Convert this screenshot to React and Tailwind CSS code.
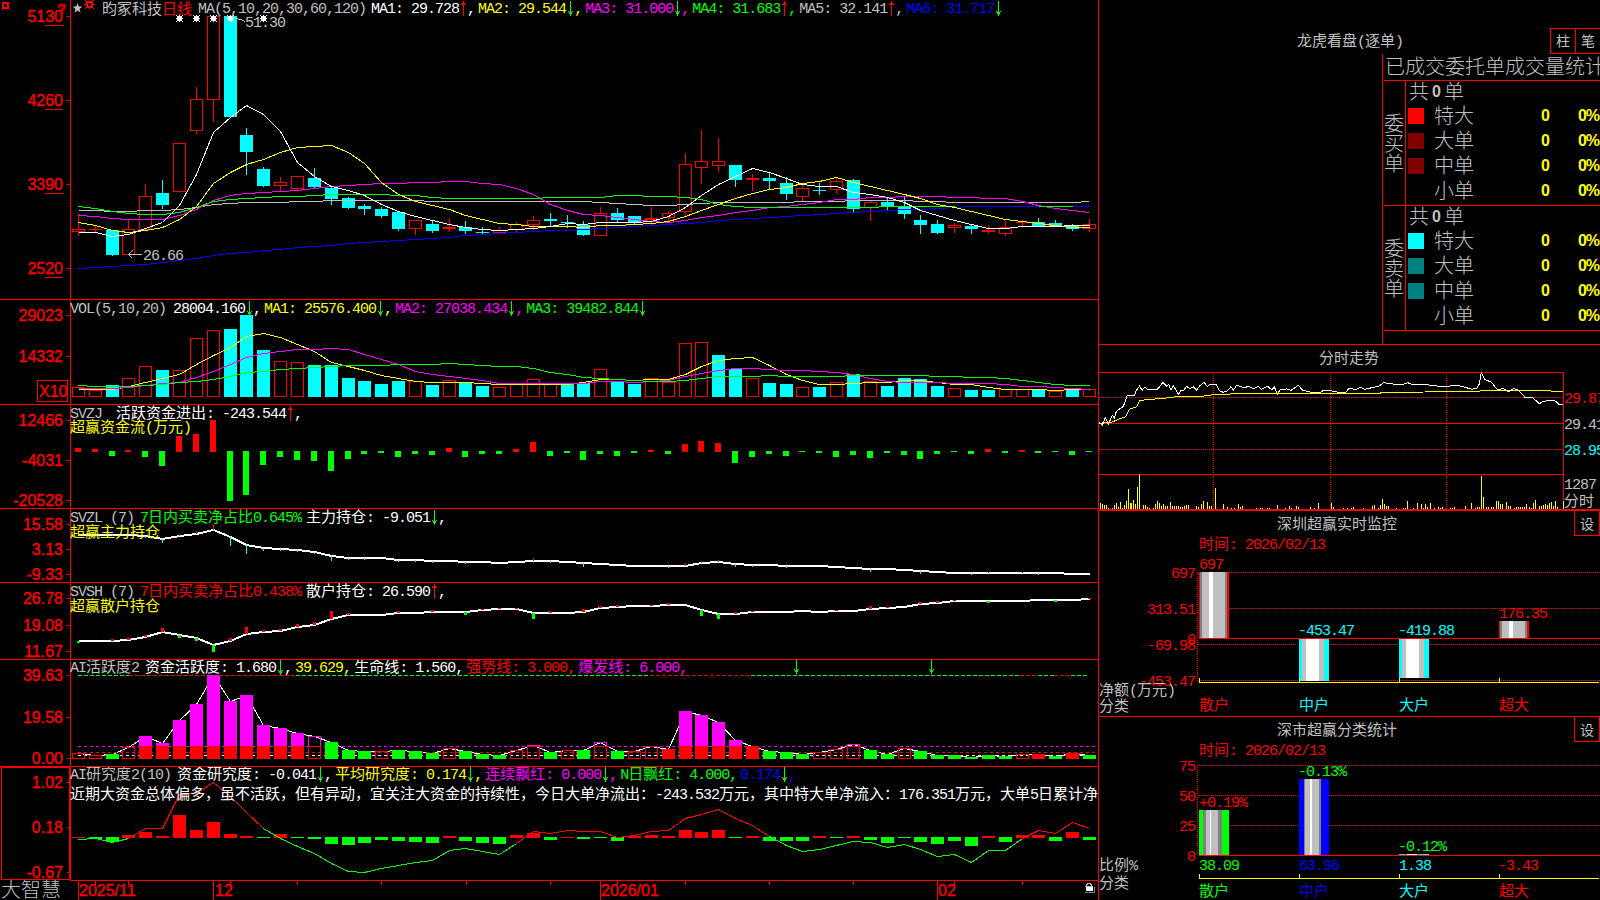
import { Fragment } from "react"

const RED = "#ff0000"
const GREEN = "#00ff00"
const CYAN = "#00ffff"
const MAGENTA = "#ff00ff"
const YELLOW = "#ffff00"
const BLUE = "#0000ff"
const SILVER = "#c0c0c0"

const cx = (i) => Math.floor(78.4 + 16.85 * i)

// [color, high, top, bottom, low]
const candles = [
  ["r", 214, 229, 231, 235], ["r", 225, 229, 229, 232], ["c", 230, 230, 255, 255], ["r", 219, 229, 254, 254],
  ["r", 184, 196, 229, 229], ["c", 180, 193, 205, 208], ["r", 143, 143, 191, 191], ["r", 87, 99, 130, 133],
  ["r", 16, 16, 99, 121], ["c", 16, 16, 117, 117], ["c", 128, 135, 152, 174], ["c", 167, 169, 186, 186],
  ["r", 177, 182, 185, 191], ["r", 176, 176, 188, 190], ["c", 168, 178, 187, 188], ["c", 186, 188, 199, 204],
  ["c", 197, 198, 208, 208], ["c", 204, 206, 209, 214], ["c", 207, 209, 216, 217], ["c", 212, 212, 229, 230],
  ["r", 220, 220, 228, 234], ["c", 220, 224, 231, 232], ["r", 218, 227, 228, 231], ["c", 221, 227, 231, 233],
  ["c", 227, 232, 233, 234], ["r", 227, 230, 232, 232], ["r", 222, 224, 229, 232], ["r", 216, 220, 224, 229],
  ["c", 213, 219, 221, 226], ["c", 215, 222, 223, 227], ["c", 221, 225, 235, 235], ["r", 207, 213, 235, 235],
  ["c", 208, 213, 220, 222], ["c", 216, 216, 222, 224], ["r", 207, 218, 219, 224], ["r", 211, 213, 217, 221],
  ["r", 153, 164, 211, 215], ["r", 130, 161, 167, 183], ["r", 138, 161, 165, 171], ["c", 165, 165, 180, 186],
  ["r", 174, 178, 179, 190], ["c", 172, 178, 181, 189], ["c", 177, 183, 194, 199], ["r", 184, 188, 196, 200],
  ["c", 183, 190, 191, 194], ["r", 178, 181, 189, 193], ["c", 179, 180, 209, 212], ["r", 200, 202, 207, 220],
  ["c", 198, 202, 206, 210], ["c", 196, 207, 214, 218], ["c", 215, 220, 225, 233], ["c", 220, 224, 233, 233],
  ["r", 223, 225, 227, 232], ["c", 224, 226, 229, 233], ["r", 225, 230, 231, 233], ["r", 221, 227, 233, 235],
  ["r", 220, 222, 222, 225], ["c", 218, 222, 226, 226], ["c", 220, 223, 226, 226], ["c", 224, 225, 229, 230],
  ["r", 219, 224, 228, 231],
]

const priceLines = [
  [BLUE, [268, 267, 266, 265, 264, 262, 260, 258, 255, 253, 252, 250, 249, 247, 246, 245, 243, 242, 241, 240, 239, 238, 237, 235, 234, 233, 232, 231, 230, 230, 229, 228, 227, 226, 225, 224, 223, 222, 220, 219, 218, 217, 216, 215, 214, 213, 212, 211, 210, 209, 209, 208, 207, 206, 206, 206, 206, 206, 206, 206, 206]],
  [SILVER, [210, 210, 211, 211, 210, 210, 209, 207, 204, 203, 202, 202, 202, 201, 201, 200, 200, 200, 200, 200, 200, 201, 201, 201, 201, 201, 201, 201, 201, 201, 201, 202, 203, 204, 205, 205, 204, 203, 202, 202, 202, 202, 202, 201, 201, 201, 200, 200, 200, 200, 201, 201, 202, 202, 202, 202, 202, 202, 202, 202, 201]],
  [MAGENTA, [215, 216, 218, 219, 219, 219, 215, 209, 200, 195, 193, 192, 191, 190, 188, 186, 185, 184, 183, 183, 182, 182, 181, 181, 183, 184, 188, 194, 204, 210, 214, 215, 217, 219, 221, 222, 220, 217, 215, 212, 210, 207, 206, 204, 202, 199, 199, 197, 197, 196, 196, 196, 197, 197, 198, 198, 201, 205, 208, 210, 212]],
  [GREEN, [206, 208, 211, 213, 214, 214, 212, 207, 201, 199, 198, 197, 196, 196, 195, 194, 194, 194, 194, 195, 195, 197, 198, 198, 198, 198, 198, 198, 197, 197, 197, 197, 195, 195, 196, 196, 197, 199, 204, 206, 207, 207, 207, 207, 207, 207, 207, 207, 206, 206, 206, 206, 206]],
  [YELLOW, [222, 225, 230, 232, 230, 227, 219, 206, 183, 172, 164, 159, 152, 147, 146, 145, 152, 163, 182, 194, 201, 205, 209, 215, 219, 223, 224, 226, 226, 226, 227, 225, 225, 224, 223, 221, 216, 210, 204, 198, 193, 189, 187, 183, 181, 177, 182, 186, 190, 194, 198, 204, 207, 211, 215, 219, 221, 223, 225, 227, 227]],
  ["#ffffff", [232, 232, 236, 234, 228, 222, 205, 174, 132, 117, 105, 114, 131, 162, 176, 186, 190, 195, 204, 211, 216, 220, 224, 227, 229, 230, 229, 228, 226, 223, 224, 222, 222, 222, 221, 216, 207, 195, 184, 176, 168, 172, 178, 184, 186, 186, 192, 194, 197, 202, 210, 215, 220, 224, 228, 228, 226, 226, 226, 225, 225]],
]

const volumeTops = [387, 390, 385, 378, 366, 370, 370, 338, 330, 329, 315, 350, 361, 362, 365, 365, 378, 381, 384, 381, 381, 385, 380, 382, 386, 387, 384, 379, 384, 383, 383, 369, 382, 384, 378, 382, 343, 342, 355, 369, 378, 383, 384, 387, 387, 382, 374, 381, 386, 378, 379, 386, 388, 390, 390, 389, 389, 390, 391, 390, 389]
const volumeRed = [0, 1, 3, 4, 6, 7, 8, 12, 13, 20, 22, 25, 26, 27, 28, 31, 34, 35, 36, 37, 40, 43, 45, 47, 52, 55, 56, 58, 60]

const volumeLines = [
  [YELLOW, [389, 389, 389, 386, 382, 378, 374, 364, 355, 347, 336, 333, 337, 344, 351, 362, 366, 370, 375, 378, 381, 382, 382, 382, 383, 384, 384, 384, 384, 384, 382, 379, 379, 380, 379, 379, 374, 366, 360, 358, 357, 365, 374, 380, 384, 384, 383, 382, 382, 380, 380, 382, 384, 384, 387, 389, 389, 389, 390, 389, 389]],
  [MAGENTA, [388, 388, 388, 387, 385, 383, 382, 377, 371, 364, 357, 353, 351, 349, 349, 348, 349, 354, 359, 364, 371, 374, 376, 378, 380, 383, 383, 383, 383, 383, 383, 381, 381, 382, 381, 380, 376, 373, 370, 368, 368, 369, 370, 370, 371, 372, 374, 378, 381, 382, 382, 382, 383, 383, 383, 384, 386, 386, 387, 388, 389]],
  [GREEN, [385, 386, 386, 386, 385, 384, 382, 381, 379, 376, 372, 371, 369, 368, 367, 366, 365, 365, 365, 364, 364, 364, 363, 364, 365, 366, 366, 368, 372, 374, 377, 378, 379, 380, 381, 381, 380, 378, 376, 376, 376, 375, 376, 376, 376, 376, 375, 375, 375, 375, 375, 376, 376, 377, 377, 378, 380, 382, 384, 385, 385]],
]

// end of every bar, measured from the zero line at 451
const flow = [448, 449, 456, 450, 457, 466, 436, 434, 420, 501, 495, 465, 457, 460, 461, 471, 459, 454, 453, 457, 454, 455, 448, 457, 454, 454, 449, 442, 456, 453, 460, 454, 456, 453, 450, 454, 444, 441, 443, 463, 457, 454, 456, 452, 453, 457, 455, 458, 453, 455, 459, 454, 452, 454, 449, 453, 450, 453, 452, 455, 452]

const mainHold = [535, 535, 535, 535, 536, 539, 536, 534, 530, 537, 545, 548, 549, 550, 552, 556, 558, 558, 558, 560, 560, 561, 561, 562, 562, 563, 562, 561, 561, 562, 563, 564, 565, 566, 566, 566, 566, 563, 562, 564, 565, 565, 566, 566, 566, 567, 568, 569, 569, 570, 571, 572, 573, 573, 573, 573, 573, 573, 573, 574, 574]
const mainTicks = [
  [5, 543], [6, 534], [7, 531], [8, 524], [9, 546], [10, 554], [11, 551], [14, 554], [15, 561], [19, 562], [23, 564], [27, 558],
  [30, 567], [35, 568], [36, 563], [37, 561], [38, 560], [39, 567], [40, 567], [42, 568], [47, 572], [50, 574], [53, 575],
  [54, 572], [56, 572], [57, 575], [2, 536], [4, 538], [12, 551], [13, 552], [16, 560], [17, 560], [20, 562], [21, 563], [28, 563],
]

const retailHold = [641, 641, 641, 640, 637, 632, 635, 638, 645, 641, 634, 632, 631, 627, 625, 619, 615, 615, 615, 613, 613, 612, 612, 612, 610, 609, 609, 613, 613, 613, 612, 608, 607, 606, 606, 605, 605, 610, 614, 614, 612, 612, 612, 611, 612, 611, 611, 609, 608, 607, 604, 603, 601, 601, 601, 601, 601, 600, 600, 600, 599]
const retailTicks = [
  [0, 643], [2, 639], [3, 638], [4, 635], [5, 628], [6, 638], [7, 641], [8, 652], [9, 638], [10, 627], [11, 630], [12, 629],
  [13, 624], [14, 622], [15, 611], [16, 613], [19, 611], [21, 610], [23, 615], [24, 609], [25, 608], [26, 608], [27, 619],
  [28, 611], [30, 609], [31, 606], [32, 605], [34, 605], [35, 603], [37, 616], [38, 619], [39, 612], [40, 611], [45, 610],
  [47, 606], [48, 607], [50, 602], [51, 601], [52, 600], [54, 603], [58, 602], [60, 598],
]

// o: hollow red, g: green, m: magenta over red, h: hollow magenta over red, f: solid red
const activity = [
  ["o", 753], ["o", 755], ["g", 754], ["o", 747], ["m", 736], ["m", 743], ["m", 720], ["m", 704], ["m", 675], ["m", 701],
  ["m", 695], ["m", 725], ["m", 728], ["m", 733], ["h", 736], ["g", 742], ["g", 750], ["g", 751], ["o", 751], ["g", 750],
  ["g", 751], ["g", 753], ["o", 748], ["g", 751], ["g", 754], ["g", 755], ["o", 750], ["h", 745], ["g", 752], ["o", 750],
  ["g", 750], ["h", 742], ["g", 751], ["o", 751], ["o", 746], ["f", 749], ["m", 711], ["m", 715], ["m", 722], ["m", 740],
  ["f", 746], ["g", 751], ["g", 752], ["g", 754], ["o", 752], ["o", 749], ["h", 744], ["g", 750], ["g", 754], ["o", 748],
  ["g", 751], ["g", 755], ["g", 755], ["g", 757], ["g", 755], ["g", 756], ["o", 754], ["f", 754], ["g", 756], ["f", 753],
  ["g", 755],
]
const ceiling = [
  [78, 129, GREEN], [129, 296, RED], [296, 650, GREEN], [650, 751, RED], [751, 1020, GREEN],
  [1020, 1038, RED], [1038, 1054, GREEN], [1054, 1071, RED], [1071, 1089, GREEN],
]

const research = [837, 839, 842, 835, 832, 836, 815, 830, 822, 834, 836, 838, 834, 838, 839, 844, 845, 843, 840, 841, 842, 843, 836, 841, 843, 844, 835, 833, 840, 837, 839, 838, 841, 836, 835, 836, 830, 832, 830, 838, 836, 841, 841, 841, 836, 838, 836, 840, 843, 838, 842, 844, 841, 846, 836, 842, 835, 835, 841, 832, 840]
const researchLine = [839, 838, 842, 838, 828, 828, 794, 793, 782, 796, 812, 828, 838, 846, 853, 863, 871, 872, 868, 865, 862, 860, 850, 848, 851, 854, 843, 831, 833, 830, 831, 831, 837, 835, 831, 830, 818, 814, 809, 818, 825, 836, 845, 851, 849, 845, 841, 842, 847, 844, 849, 856, 854, 862, 850, 850, 838, 830, 833, 822, 828]
const researchRuns = [[0, 3, GREEN], [3, 11, RED], [11, 26, GREEN], [26, 41, RED], [41, 56, GREEN], [56, 60, RED]]

// intraday curves, in thirds of a pixel
const intraday = [28,247,37,256,46,233,55,253,67,226,73,235,79,214,100,199,112,166,133,166,139,151,149,138,156,151,165,141,172,149,190,148,200,150,210,139,219,127,230,139,236,133,243,150,250,137,265,163,273,152,282,150,290,139,300,146,310,141,320,150,330,137,342,127,352,140,360,133,378,133,388,152,400,157,412,153,423,140,430,151,440,136,452,139,462,144,475,139,490,146,505,139,515,148,533,139,545,149,553,141,562,162,572,148,590,147,603,151,625,136,638,151,660,156,690,159,700,151,720,152,740,156,768,157,776,146,800,148,810,142,825,148,850,142,868,138,880,128,900,131,925,134,940,133,953,128,965,133,1000,132,1030,137,1060,140,1100,136,1120,140,1145,148,1160,145,1168,132,1174,98,1184,118,1205,127,1222,149,1240,146,1255,155,1272,146,1285,150,1305,172,1328,173,1348,191,1360,184,1385,181,1398,184,1405,192,1420,193]
const average = [28,250,45,248,67,246,90,236,106,231,118,208,139,201,149,182,170,179,220,175,260,170,335,169,370,164,445,161,870,160,875,157,1005,156,1010,154,1168,154,1172,151,1380,152,1385,154,1420,154]
const trades = [31,489,37,492,43,495,49,495,55,504,67,504,73,495,79,489,85,500,91,486,97,504,103,495,109,483,115,447,121,489,124,489,130,480,136,492,142,441,148,403,160,495,166,495,172,501,178,504,190,504,196,492,202,483,208,489,214,498,220,492,226,498,232,498,241,486,247,498,253,498,259,498,265,498,271,501,277,501,283,498,289,495,295,495,319,498,325,501,334,492,340,483,352,486,358,498,364,498,376,444,400,492,412,501,424,504,433,504,445,492,451,501,457,498,499,504,511,504,517,504,532,504,538,504,562,495,586,504,598,498,604,504,619,498,625,501,661,501,673,504,685,489,724,489,730,501,760,504,772,504,784,504,790,501,820,504,847,498,853,495,865,504,871,495,877,477,883,492,889,498,895,498,919,504,940,504,946,504,952,483,970,504,982,489,994,492,1000,504,1006,492,1012,501,1021,489,1033,504,1045,501,1051,504,1057,501,1081,504,1087,504,1093,501,1126,498,1144,489,1156,504,1162,501,1168,501,1174,408,1180,471,1189,501,1195,501,1204,501,1210,501,1219,483,1225,483,1231,492,1237,492,1249,486,1255,498,1261,498,1273,504,1279,501,1285,501,1291,501,1297,501,1303,501,1309,492,1318,501,1324,504,1330,489,1336,480,1348,498,1354,498,1360,495,1366,492,1372,495,1378,489,1384,486,1390,498,1396,483,1402,501,1420,483]

const pairs = (flat) => Array.from({ length: flat.length / 2 }, (_, i) => [1090 + flat[2 * i] / 3, 340 + flat[2 * i + 1] / 3])
const series = (ys, from = 0) => ys.map((y, i) => `${cx(i + from) + 0.5},${y + 0.5}`).join(" ")

const CJK = "font-['Noto_Sans_CJK_SC',sans-serif] font-normal text-[15px] tracking-normal"
const LATIN = "font-['Liberation_Mono',monospace] font-normal text-[15px] tracking-[-1px]"
const AXIS = "font-['Liberation_Sans',sans-serif] text-[16px]"
const chunks = (text) => text.split(/([\u3000-\u9fff\uff00-\uffef]+)/).filter(Boolean)
const isCjk = (text) => /[\u3000-\u9fff\uff00-\uffef]/.test(text)

function Words({ children, className = "" }) {
  return (
    <span className={`whitespace-pre ${className}`}>
      {chunks(children).map((part, i) => (
        <span key={i} className={isCjk(part) ? CJK : LATIN}>{part}</span>
      ))}
    </span>
  )
}

function Arrow({ up }) {
  return (
    <svg className="h-[15px] w-2 shrink-0" viewBox="0 0 8 15" shapeRendering="crispEdges">
      {up ? (
        <path d="M4 0h1v15h-1zM3 2h3v1h-3zM2 3h5v1h-5z" fill={RED} />
      ) : (
        <path d="M4 0h1v15h-1zM2 10h1v1h3v-1h1v1h-1v2h-3v-2h-1z" fill={GREEN} />
      )}
    </svg>
  )
}

// one "name: value↑," item of an indicator header
function Item({ text, dir, color, last }) {
  return (
    <span className={`mr-[3px] flex shrink-0 items-center ${color}`}>
      <Words>{text}</Words>
      {dir && <Arrow up={dir === "up"} />}
      {!last && <Words>,</Words>}
    </span>
  )
}

function Header({ className, children }) {
  return <div className={`absolute left-[70px] flex h-4 items-center leading-4 ${className}`}>{children}</div>
}

function Scale({ ticks, bottom, top }) {
  return (
    <>
      <rect x={70} y={top} width={1} height={bottom - top} fill={RED} />
      {ticks.map(([label, y]) => (
        <Fragment key={label}>
          <rect x={67} y={y} width={3} height={1} fill={RED} />
          <text x={63} y={y + 6} textAnchor="end" fill={RED} stroke={RED} strokeWidth={0.35} className={AXIS}>
            {label}
          </text>
        </Fragment>
      ))}
    </>
  )
}

function Panel({ top, height, ticks, className, children, header }) {
  return (
    <section className={`relative w-[1098px] shrink-0 overflow-hidden border-[#ff0000] ${className}`}>
      <svg className="block" width={1098} height={height} viewBox={`0 ${top} 1098 ${height}`} shapeRendering="crispEdges">
        <Scale ticks={ticks} top={top} bottom={top + height} />
        {children}
      </svg>
      {header}
    </section>
  )
}

function Box({ x, top, bottom, color }) {
  return <rect x={x - 5.5} y={top + 0.5} width={12} height={bottom - top} fill="none" stroke={color} />
}

function Spark({ x, y }) {
  return (
    <g fill="#ffffff">
      <rect x={x - 2} y={y - 2} width={5} height={5} />
      <path d={`M${x} ${y - 3}h1v7h-1zM${x - 3} ${y}h7v1h-7zM${x - 3} ${y - 3}h1v1h-1zM${x + 3} ${y - 3}h1v1h-1zM${x - 3} ${y + 3}h1v1h-1zM${x + 3} ${y + 3}h1v1h-1z`} />
    </g>
  )
}

function Candle({ x, kind, high, top, bottom, low }) {
  const color = kind === "r" ? RED : CYAN
  const thin = bottom - top < 2
  return (
    <g>
      <rect x={x} y={high} width={1} height={top - high} fill={color} />
      <rect x={x} y={bottom} width={1} height={low - bottom + 1} fill={color} />
      {kind === "c" && <rect x={x - 6} y={top} width={13} height={bottom - top} fill={color} />}
      {kind === "r" && thin && <rect x={x - 6} y={top} width={13} height={bottom - top + 1} fill={color} />}
      {kind === "r" && !thin && <Box x={x} top={top} bottom={bottom} color={color} />}
    </g>
  )
}

function PricePanel() {
  return (
    <Panel
      top={0}
      height={299}
      className="h-[300px] border-b"
      ticks={[["5130", 16], ["4260", 100], ["3390", 184], ["2520", 268]]}
      header={
        <div className="absolute left-[102px] top-0 flex h-4 items-center leading-4">
          <Words className="text-[#c0c0c0]">昀冢科技</Words>
          <Words className="mr-1.5 text-[#ff0000]">日线</Words>
          <Words className="mr-[5px] text-[#c0c0c0]">MA(5,10,20,30,60,120)</Words>
          <Item text="MA1: 29.728" dir="up" color="text-white" />
          <Item text="MA2: 29.544" dir="down" color="text-[#ffff00]" />
          <Item text="MA3: 31.000" dir="down" color="text-[#ff00ff]" />
          <Item text="MA4: 31.683" dir="up" color="text-[#00ff00]" />
          <Item text="MA5: 32.141" dir="up" color="text-[#c0c0c0]" />
          <Item text="MA6: 31.717" dir="down" color="text-[#0000ff]" last />
        </div>
      }
    >
      {[25, 109, 193, 277].map((y) => <rect key={y} x={45} y={y} width={18} height={1} fill={RED} />)}
      <path d="M3 3h5v5h-5z" fill="none" stroke={RED} strokeWidth={2} />
      <path d="M9 9h1v1h-1zM2 9h1v1h-1z" fill={RED} />
      <text x={57} y={14} fill="#d00000" stroke="#d00000" className="font-['Liberation_Sans',sans-serif] text-[15px] font-bold">?</text>
      <path d="M77.500 3l1.300 3.600h3.600l-2.900 2.300 1.100 3.800-3.100-2.300-3.100 2.300 1.100-3.800-2.900-2.300h3.600z" fill={SILVER} shapeRendering="auto" />
      <path d="M87 2h5v5h-5z" fill="none" stroke={RED} strokeWidth={2} />
      <path d="M85 0h1v1h-1zM93 0h1v1h-1zM85 8h1v1h-1zM93 8h1v1h-1zM89 8h1v1h-1zM84 4h2v1h-2zM93 4h2v1h-2z" fill={RED} />
      {candles.map(([kind, high, top, bottom, low], i) => (
        <Candle key={i} x={cx(i)} kind={kind} high={high} top={top} bottom={bottom} low={low} />
      ))}
      {priceLines.map(([color, ys]) => (
        <polyline key={color} points={series(ys)} fill="none" stroke={color} />
      ))}
      <polyline points={series([206, 206, 206], 57)} fill="none" stroke={GREEN} />
      {[0, 1, 2, 3, 5].map((n) => <Spark key={n} x={cx(6 + n)} y={18} />)}
      <polyline points="235.500,18.500 240.500,19.500 245.500,21.500" fill="none" stroke={SILVER} />
      <text x={245} y={27} fill={SILVER} className={LATIN}>51.30</text>
      <path d="M142 254.500H128.500M132.500 250.500l-4 4 4 4" fill="none" stroke={SILVER} />
      <text x={143} y={260} fill={SILVER} className={LATIN}>26.66</text>
    </Panel>
  )
}

function VolumePanel() {
  return (
    <Panel
      top={300}
      height={104}
      className="h-[105px] border-b"
      ticks={[["29023", 315], ["14332", 356]]}
      header={
        <Header className="top-0">
          <Words className="mr-[7px] text-[#c0c0c0]">VOL(5,10,20)</Words>
          <Item text="28004.160" dir="down" color="text-white" />
          <Item text="MA1: 25576.400" dir="down" color="text-[#ffff00]" />
          <Item text="MA2: 27038.434" dir="down" color="text-[#ff00ff]" />
          <Item text="MA3: 39482.844" dir="down" color="text-[#00ff00]" last />
        </Header>
      }
    >
      <rect x={37.500} y={380.500} width={30} height={21} fill="none" stroke={RED} />
      <text x={39} y={397} fill={RED} stroke={RED} strokeWidth={0.35} className={AXIS}>X10</text>
      {volumeTops.map((top, i) =>
        volumeRed.includes(i) ? (
          <Box key={i} x={cx(i)} top={top} bottom={396} color={RED} />
        ) : (
          <rect key={i} x={cx(i) - 6} y={top} width={13} height={397 - top} fill={CYAN} />
        )
      )}
      {volumeLines.map(([color, ys]) => (
        <polyline key={color} points={series(ys)} fill="none" stroke={color} />
      ))}
    </Panel>
  )
}

function FlowPanel() {
  return (
    <Panel
      top={405}
      height={103}
      className="h-[104px] border-b"
      ticks={[["12466", 420], ["-4031", 460], ["-20528", 500]]}
      header={
        <>
          <Header className="top-0">
            <Words className="mr-1.5 text-[#c0c0c0]">{"SVZJ "}</Words>
            <Item text="活跃资金进出: -243.544" dir="up" color="text-white" />
          </Header>
          <Header className="top-[14px]">
            <Words className="text-[#ffff00]">超赢资金流(万元)</Words>
          </Header>
        </>
      }
    >
      {flow.map((end, i) =>
        end < 451 ? (
          <rect key={i} x={cx(i) - 3} y={end} width={6} height={452 - end} fill={RED} />
        ) : (
          <rect key={i} x={cx(i) - 3} y={451} width={6} height={end - 451} fill={GREEN} />
        )
      )}
    </Panel>
  )
}

function HoldPanel({ top, height, className, ticks, name, ratio, ratioColor, item, dir, note, line, marks, down, width }) {
  return (
    <Panel
      top={top}
      height={height}
      className={className}
      ticks={ticks}
      header={
        <>
          <Header className="top-0">
            <Words className="mr-1.5 text-[#c0c0c0]">{name}</Words>
            <Words className={`mr-[5px] ${ratioColor}`}>{ratio}</Words>
            <Item text={item} dir={dir} color="text-white" />
          </Header>
          <Header className="top-[14px]">
            <Words className="text-[#ffff00]">{note}</Words>
          </Header>
        </>
      }
    >
      <polyline points={line.map((y, i) => `${cx(i) + 0.5},${y}`).join(" ")} fill="none" stroke="#ffffff" strokeWidth={2} />
      {marks.map(([i, end]) => (
        <rect
          key={i}
          x={cx(i) - (width - 1) / 2}
          y={Math.min(end, line[i])}
          width={width}
          height={Math.abs(end - line[i])}
          fill={end < line[i] ? RED : down}
        />
      ))}
    </Panel>
  )
}

function ActivityBar({ kind, x, top }) {
  if (kind === "g") return <rect x={x - 6} y={top} width={13} height={759 - top} fill={GREEN} />
  if (kind === "f") return <rect x={x - 6} y={top} width={13} height={759 - top} fill={RED} />
  if (kind === "o") return <Box x={x} top={top} bottom={758} color={RED} />
  if (kind === "h") {
    return (
      <>
        <Box x={x} top={top} bottom={746} color={MAGENTA} />
        <Box x={x} top={746} bottom={758} color={RED} />
      </>
    )
  }
  return (
    <>
      <rect x={x - 6} y={top} width={13} height={746 - top} fill={MAGENTA} />
      <rect x={x - 6} y={746} width={13} height={13} fill={RED} />
    </>
  )
}

function ActivityPanel() {
  return (
    <Panel
      top={660}
      height={106}
      className="h-[107px] border-b"
      ticks={[["39.63", 675], ["19.58", 717], ["0.00", 758]]}
      header={
        <Header className="-top-px">
          <Words className="mr-1.5 text-[#c0c0c0]">AI活跃度2</Words>
          <Item text="资金活跃度: 1.680" dir="down" color="text-white" />
          <Item text="39.629" color="text-[#ffff00]" />
          <Item text="生命线: 1.560" color="text-white" />
          <Item text="强势线: 3.000" color="text-[#ff0000]" />
          <Item text="爆发线: 6.000" color="text-[#ff00ff]" />
        </Header>
      }
    >
      {ceiling.map(([from, to, color]) => (
        <line key={from} x1={from} x2={to} y1={675.5} y2={675.5} stroke={color} strokeDasharray="4 2" />
      ))}
      <polyline points={series(activity.map(([, y]) => y))} fill="none" stroke="#ffffff" />
      <line x1={78} x2={1096} y1={746.5} y2={746.5} stroke={MAGENTA} strokeDasharray="3 3" />
      <line x1={78} x2={1096} y1={752.5} y2={752.5} stroke={RED} strokeDasharray="3 3" />
      <line x1={78} x2={1096} y1={755.5} y2={755.5} stroke="#ffffff" strokeDasharray="3 3" />
      {activity.map(([kind, top], i) => <ActivityBar key={i} kind={kind} x={cx(i)} top={top} />)}
      {[796, 931].map((x) => (
        <path key={x} d={`M${x} 660h1v14h-1zM${x - 2} 669h1v1h-1zM${x + 2} 669h1v1h-1zM${x - 1} 670h3v2h-3z`} fill={GREEN} />
      ))}
    </Panel>
  )
}

function ResearchPanel() {
  return (
    <Panel
      top={767}
      height={114}
      className="h-[114px]"
      ticks={[["1.02", 782], ["0.18", 827], ["-0.67", 872]]}
      header={
        <>
          <Header className="-top-px">
            <Words className="mr-1.5 text-[#c0c0c0]">AI研究度2(10)</Words>
            <Item text="资金研究度: -0.041" dir="down" color="text-white" />
            <Item text="平均研究度: 0.174" dir="down" color="text-[#ffff00]" />
            <Item text="连续飘红: 0.000" dir="down" color="text-[#ff00ff]" />
            <Item text="N日飘红: 4.000" color="text-[#00ff00]" />
            <Item text="0.174" dir="down" color="text-[#0000ff]" />
          </Header>
          <Header className="top-[19px]">
            <Words className="text-white">
              近期大资金总体偏多，虽不活跃，但有异动，宜关注大资金的持续性，今日大单净流出：-243.532万元，其中特大单净流入：176.351万元，大单5日累计净
            </Words>
          </Header>
        </>
      }
    >
      <rect x={1.500} y={767.500} width={68} height={112} fill="none" stroke={RED} />
      <rect x={70} y={880} width={1028} height={1} fill={RED} />
      {research.map((end, i) =>
        end < 838 ? (
          <rect key={i} x={cx(i) - 6} y={end} width={13} height={838 - end} fill={RED} />
        ) : (
          <rect key={i} x={cx(i) - 6} y={837} width={13} height={end - 837} fill={GREEN} />
        )
      )}
      {researchRuns.map(([from, to, color]) => (
        <polyline key={from} points={series(researchLine.slice(from, to + 1), from)} fill="none" stroke={color} />
      ))}
    </Panel>
  )
}

function DateAxis() {
  return (
    <div className="flex h-[19px]">
      <div className="w-[70px] whitespace-nowrap pl-px font-['Noto_Sans_CJK_SC',sans-serif] text-[20px] font-light leading-[16px] text-[#c0c0c0]">大智慧</div>
      <svg width={1028} height={19} viewBox="70 881 1028 19" shapeRendering="crispEdges">
        {[78, 213, 600, 937].map((x) => <rect key={x} x={x} y={881} width={1} height={19} fill={RED} />)}
        {[95, 128, 230, 297, 381, 466, 550, 617, 685, 769, 853, 954, 1022].map((x) => (
          <rect key={x} x={x} y={881} width={1} height={4} fill={RED} />
        ))}
        {[["2025/11", 79], ["12", 215], ["2026/01", 601], ["02", 938]].map(([label, x]) => (
          <text key={label} x={x} y={896} fill={RED} stroke={RED} strokeWidth={0.35} className={AXIS}>{label}</text>
        ))}
        <path d="M1086.500 886v-2h1v-1h3v1h1v2" fill="none" stroke={SILVER} />
        <rect x={1085} y={886} width={8} height={1} fill={SILVER} />
        <rect x={1086} y={887} width={7} height={4} fill="#ffffff" />
        <path d="M1085 892.500h9.500v-6" fill="none" stroke="#808080" />
      </svg>
    </div>
  )
}

function OrderBlock({ side, swatches, className }) {
  const names = ["特大", "大单", "中单", "小单"]
  return (
    <div className={`flex border-b border-[#ff0000] ${className}`}>
      <div className="flex w-[22px] flex-col items-center justify-center border-r border-[#ff0000] pr-px text-[20px] leading-5">
        {side.split("").map((c) => <span key={c}>{c}</span>)}
      </div>
      <div className="w-[195px] text-[20px]">
        <div className="flex h-[24px] items-center pl-[3px] leading-[20px]">
          <span className="-mt-1">共</span>
          <span className="-mt-0.5 px-[3px] font-['Liberation_Sans',sans-serif] text-[16px] font-bold">0</span>
          <span className="-mt-1">单</span>
        </div>
        {names.map((name, i) => (
          <div key={name} className="flex h-[25px] items-center pb-[3px] pl-0.5 leading-[22px]">
            <span className={`mr-2.5 h-4 w-4 ${swatches[i]}`} />
            <span className="-mt-0.5 w-[96px]">{name}</span>
            <span className="w-5 text-right font-['Liberation_Sans',sans-serif] text-[16px] font-bold text-[#ffff00]">0</span>
            <span className="ml-auto pr-px font-['Liberation_Sans',sans-serif] text-[16px] font-bold tracking-[-1px] text-[#ffff00]">0%</span>
          </div>
        ))}
      </div>
    </div>
  )
}

function OrderStats() {
  return (
    <section className="h-[345px] border-b border-[#ff0000] font-['Noto_Sans_CJK_SC',sans-serif] font-light text-[#c0c0c0]">
      <div className="flex h-[54px] items-end">
        <div className="flex h-7 w-[451px] pl-[198px]"><Words className="leading-[27px]">龙虎看盘(逐单)</Words></div>
        <div className="flex h-[26px] w-[50px] border border-r-0 border-[#ff0000] text-[14px] font-normal leading-[23px]">
          <span className="w-[25px] border-r border-[#ff0000] pl-[5px]">柱</span>
          <span className="pl-[5px]">笔</span>
        </div>
      </div>
      <div className="ml-[283px] h-[290px] border-l border-[#ff0000] pl-px">
        <div className="h-[27px] overflow-hidden whitespace-nowrap border-b border-[#ff0000] pl-px text-[20px] leading-6">已成交委托单成交量统计</div>
        <OrderBlock side="委买单" swatches={["bg-[#ff0000]", "bg-[#800000]", "bg-[#800000]", ""]} className="h-[125px]" />
        <OrderBlock side="委卖单" swatches={["bg-[#00ffff]", "bg-[#008080]", "bg-[#008080]", ""]} className="h-[125px]" />
      </div>
    </section>
  )
}

function Label({ x, y, color, end, children }) {
  return (
    <text x={x} y={y + 5} fill={color} textAnchor={end ? "end" : "start"}>
      {chunks(children).map((part, i) => <tspan key={i} className={isCjk(part) ? CJK : LATIN}>{part}</tspan>)}
    </text>
  )
}

function Dotted({ x1, x2, y1, y2 }) {
  return <line x1={x1} x2={x2} y1={y1} y2={y2} stroke={RED} strokeDasharray="1 1" />
}

function Intraday() {
  return (
    <section className="h-[166px] border-b border-[#ff0000]">
      <svg className="block" width={501} height={165} viewBox="1099 345 501 165" shapeRendering="crispEdges">
        <Label x={1319} y={357.5} color={SILVER}>分时走势</Label>
        {[397.5, 449.5].map((y) => <Dotted key={y} x1={1099} x2={1563} y1={y} y2={y} />)}
        {[1213.5, 1330.5, 1446.5].map((x) => <Dotted key={x} x1={x} x2={x} y1={372} y2={509} />)}
        {[372, 423, 474, 509].map((y) => <rect key={y} x={1099} y={y} width={465} height={1} fill={RED} />)}
        <rect x={1563} y={372} width={1} height={137} fill={RED} />
        <rect x={1564} y={509} width={36} height={1} fill={RED} />
        {pairs(trades).map(([x, y], i) => <rect key={i} x={Math.floor(x)} y={Math.round(y)} width={1} height={509 - Math.round(y)} fill={YELLOW} />)}
        <polyline points={pairs(average).join(" ")} fill="none" stroke={YELLOW} />
        <polyline points={pairs(intraday).join(" ")} fill="none" stroke="#ffffff" />
        <Label x={1564} y={398} color={RED}>29.87</Label>
        <Label x={1564} y={424} color={SILVER}>29.41</Label>
        <Label x={1564} y={450} color={CYAN}>28.95</Label>
        <Label x={1564} y={484} color={SILVER}>1287</Label>
        <Label x={1564} y={501} color={SILVER}>分时</Label>
      </svg>
    </section>
  )
}

// a shaded column; every stop is [width, color]
function Column({ x, top, bottom, stops }) {
  let at = x
  return stops.map(([width, color], i) => {
    const left = at
    at += width
    return <rect key={i} x={left} y={top} width={width} height={bottom - top} fill={color} />
  })
}

const redStops = [[1, RED], [2, "#808080"], [7, SILVER], [4, "#ffffff"], [12, SILVER], [2, "#808080"], [2, RED]]
const cyanStops = [[3, CYAN], [4, SILVER], [13, "#ffffff"], [5, SILVER], [5, CYAN]]
const greenStops = [[4, GREEN], [3, "#808080"], [4, SILVER], [1, "#ffffff"], [7, SILVER], [4, "#808080"], [7, GREEN]]
const blueStops = [[5, BLUE], [1, "#808080"], [5, SILVER], [2, "#ffffff"], [7, SILVER], [2, "#808080"], [8, BLUE]]
const flatStops = [[6, CYAN], [2, "#808080"], [10, "#ffffff"], [2, "#808080"], [10, CYAN]]

function SetButton() {
  return (
    <button className="absolute right-0 top-0 h-[25px] w-[26px] border border-t-0 border-[#ff0000] font-['Noto_Sans_CJK_SC',sans-serif] text-[14px] font-normal leading-[21px] text-[#c0c0c0]">
      设
    </button>
  )
}

function YellowAxis({ y }) {
  return (
    <>
      <rect x={1199} y={y} width={400} height={1} fill={YELLOW} />
      {[1199, 1299, 1399, 1499].map((x) => <rect key={x} x={x} y={y - 4} width={1} height={4} fill={YELLOW} />)}
    </>
  )
}

function Monitor() {
  return (
    <section className="relative h-[206px] border-b border-[#ff0000]">
      <svg className="block" width={501} height={205} viewBox="1099 511 501 205" shapeRendering="crispEdges">
        <Label x={1277} y={523.5} color={SILVER}>深圳超赢实时监控</Label>
        <Label x={1199} y={544} color={RED}>时间: 2026/02/13</Label>
        {[572.5, 608.5, 644.5, 680.5].map((y) => <Dotted key={y} x1={1197} x2={1600} y1={y} y2={y} />)}
        <Dotted x1={1197.500} x2={1197.500} y1={572} y2={680} />
        <Label x={1195} y={573} color={RED} end>697</Label>
        <Label x={1195} y={609} color={RED} end>313.51</Label>
        <Label x={1195} y={639} color={RED} end>0</Label>
        <Label x={1195} y={645} color={RED} end>-69.98</Label>
        <Label x={1195} y={681} color={RED} end>-453.47</Label>
        <Column x={1199} top={572} bottom={638} stops={redStops} />
        <Column x={1299} top={639} bottom={681} stops={cyanStops} />
        <Column x={1399} top={639} bottom={678} stops={cyanStops} />
        <Column x={1499} top={621} bottom={638} stops={redStops} />
        <rect x={1199} y={638} width={401} height={1} fill={RED} />
        <YellowAxis y={682} />
        <Label x={1199} y={564} color={RED}>697</Label>
        <Label x={1298} y={630} color={CYAN}>-453.47</Label>
        <Label x={1398} y={630} color={CYAN}>-419.88</Label>
        <Label x={1499} y={613} color={RED}>176.35</Label>
        <Label x={1099} y={689.5} color={SILVER}>净额(万元)</Label>
        <Label x={1099} y={705.5} color={SILVER}>分类</Label>
        <Label x={1199} y={705} color={RED}>散户</Label>
        <Label x={1299} y={705} color={CYAN}>中户</Label>
        <Label x={1399} y={705} color={CYAN}>大户</Label>
        <Label x={1499} y={705} color={RED}>超大</Label>
      </svg>
      <SetButton />
    </section>
  )
}

function Categories() {
  return (
    <section className="relative h-[183px]">
      <svg className="block" width={501} height={183} viewBox="1099 717 501 183" shapeRendering="crispEdges">
        <Label x={1277} y={729.5} color={SILVER}>深市超赢分类统计</Label>
        <Label x={1199} y={750} color={RED}>时间: 2026/02/13</Label>
        {[765.5, 795.5, 825.5].map((y) => <Dotted key={y} x1={1199} x2={1600} y1={y} y2={y} />)}
        <Dotted x1={1197.500} x2={1197.500} y1={765} y2={855} />
        {[["75", 766], ["50", 796], ["25", 826], ["0", 856]].map(([label, y]) => (
          <Label key={label} x={1195} y={y} color={RED} end>{label}</Label>
        ))}
        <Column x={1199} top={810} bottom={855} stops={greenStops} />
        <Column x={1299} top={779} bottom={855} stops={blueStops} />
        <rect x={1199} y={855} width={401} height={1} fill={RED} />
        <Column x={1399} top={854} bottom={855} stops={flatStops} />
        <YellowAxis y={878} />
        <Label x={1199} y={802} color={RED}>+0.19%</Label>
        <Label x={1298} y={771} color={GREEN}>-0.13%</Label>
        <Label x={1398} y={846} color={GREEN}>-0.12%</Label>
        <Label x={1199} y={865} color={GREEN}>38.09</Label>
        <Label x={1299} y={865} color={BLUE}>63.96</Label>
        <Label x={1399} y={865} color={CYAN}>1.38</Label>
        <Label x={1498} y={865} color={RED}>-3.43</Label>
        <Label x={1099} y={864.5} color={SILVER}>比例%</Label>
        <Label x={1099} y={882.5} color={SILVER}>分类</Label>
        <Label x={1199} y={891} color={GREEN}>散户</Label>
        <Label x={1299} y={891} color={BLUE}>中户</Label>
        <Label x={1399} y={891} color={CYAN}>大户</Label>
        <Label x={1499} y={891} color={RED}>超大</Label>
      </svg>
      <SetButton />
    </section>
  )
}

export default function App() {
  return (
    <div className="flex h-[900px] w-[1600px] overflow-hidden bg-black">
      <main className="flex w-[1099px] shrink-0 flex-col border-r border-[#ff0000]">
        <PricePanel />
        <VolumePanel />
        <FlowPanel />
        <HoldPanel
          top={509}
          height={73}
          className="h-[74px] border-b"
          ticks={[["15.58", 524], ["3.13", 549], ["-9.33", 574]]}
          name="SVZL (7)"
          ratio="7日内买卖净占比0.645%"
          ratioColor="text-[#00ff00]"
          item="主力持仓: -9.051"
          dir="down"
          note="超赢主力持仓"
          line={mainHold}
          marks={mainTicks}
          down={CYAN}
          width={1}
        />
        <HoldPanel
          top={583}
          height={76}
          className="h-[77px] border-b"
          ticks={[["26.78", 598], ["19.08", 625], ["11.67", 651]]}
          name="SVSH (7)"
          ratio="7日内买卖净占比0.438%"
          ratioColor="text-[#ff0000]"
          item="散户持仓: 26.590"
          dir="up"
          note="超赢散户持仓"
          line={retailHold}
          marks={retailTicks}
          down={GREEN}
          width={3}
        />
        <ActivityPanel />
        <ResearchPanel />
        <DateAxis />
      </main>
      <aside className="flex w-[501px] shrink-0 flex-col">
        <OrderStats />
        <Intraday />
        <Monitor />
        <Categories />
      </aside>
    </div>
  )
}
